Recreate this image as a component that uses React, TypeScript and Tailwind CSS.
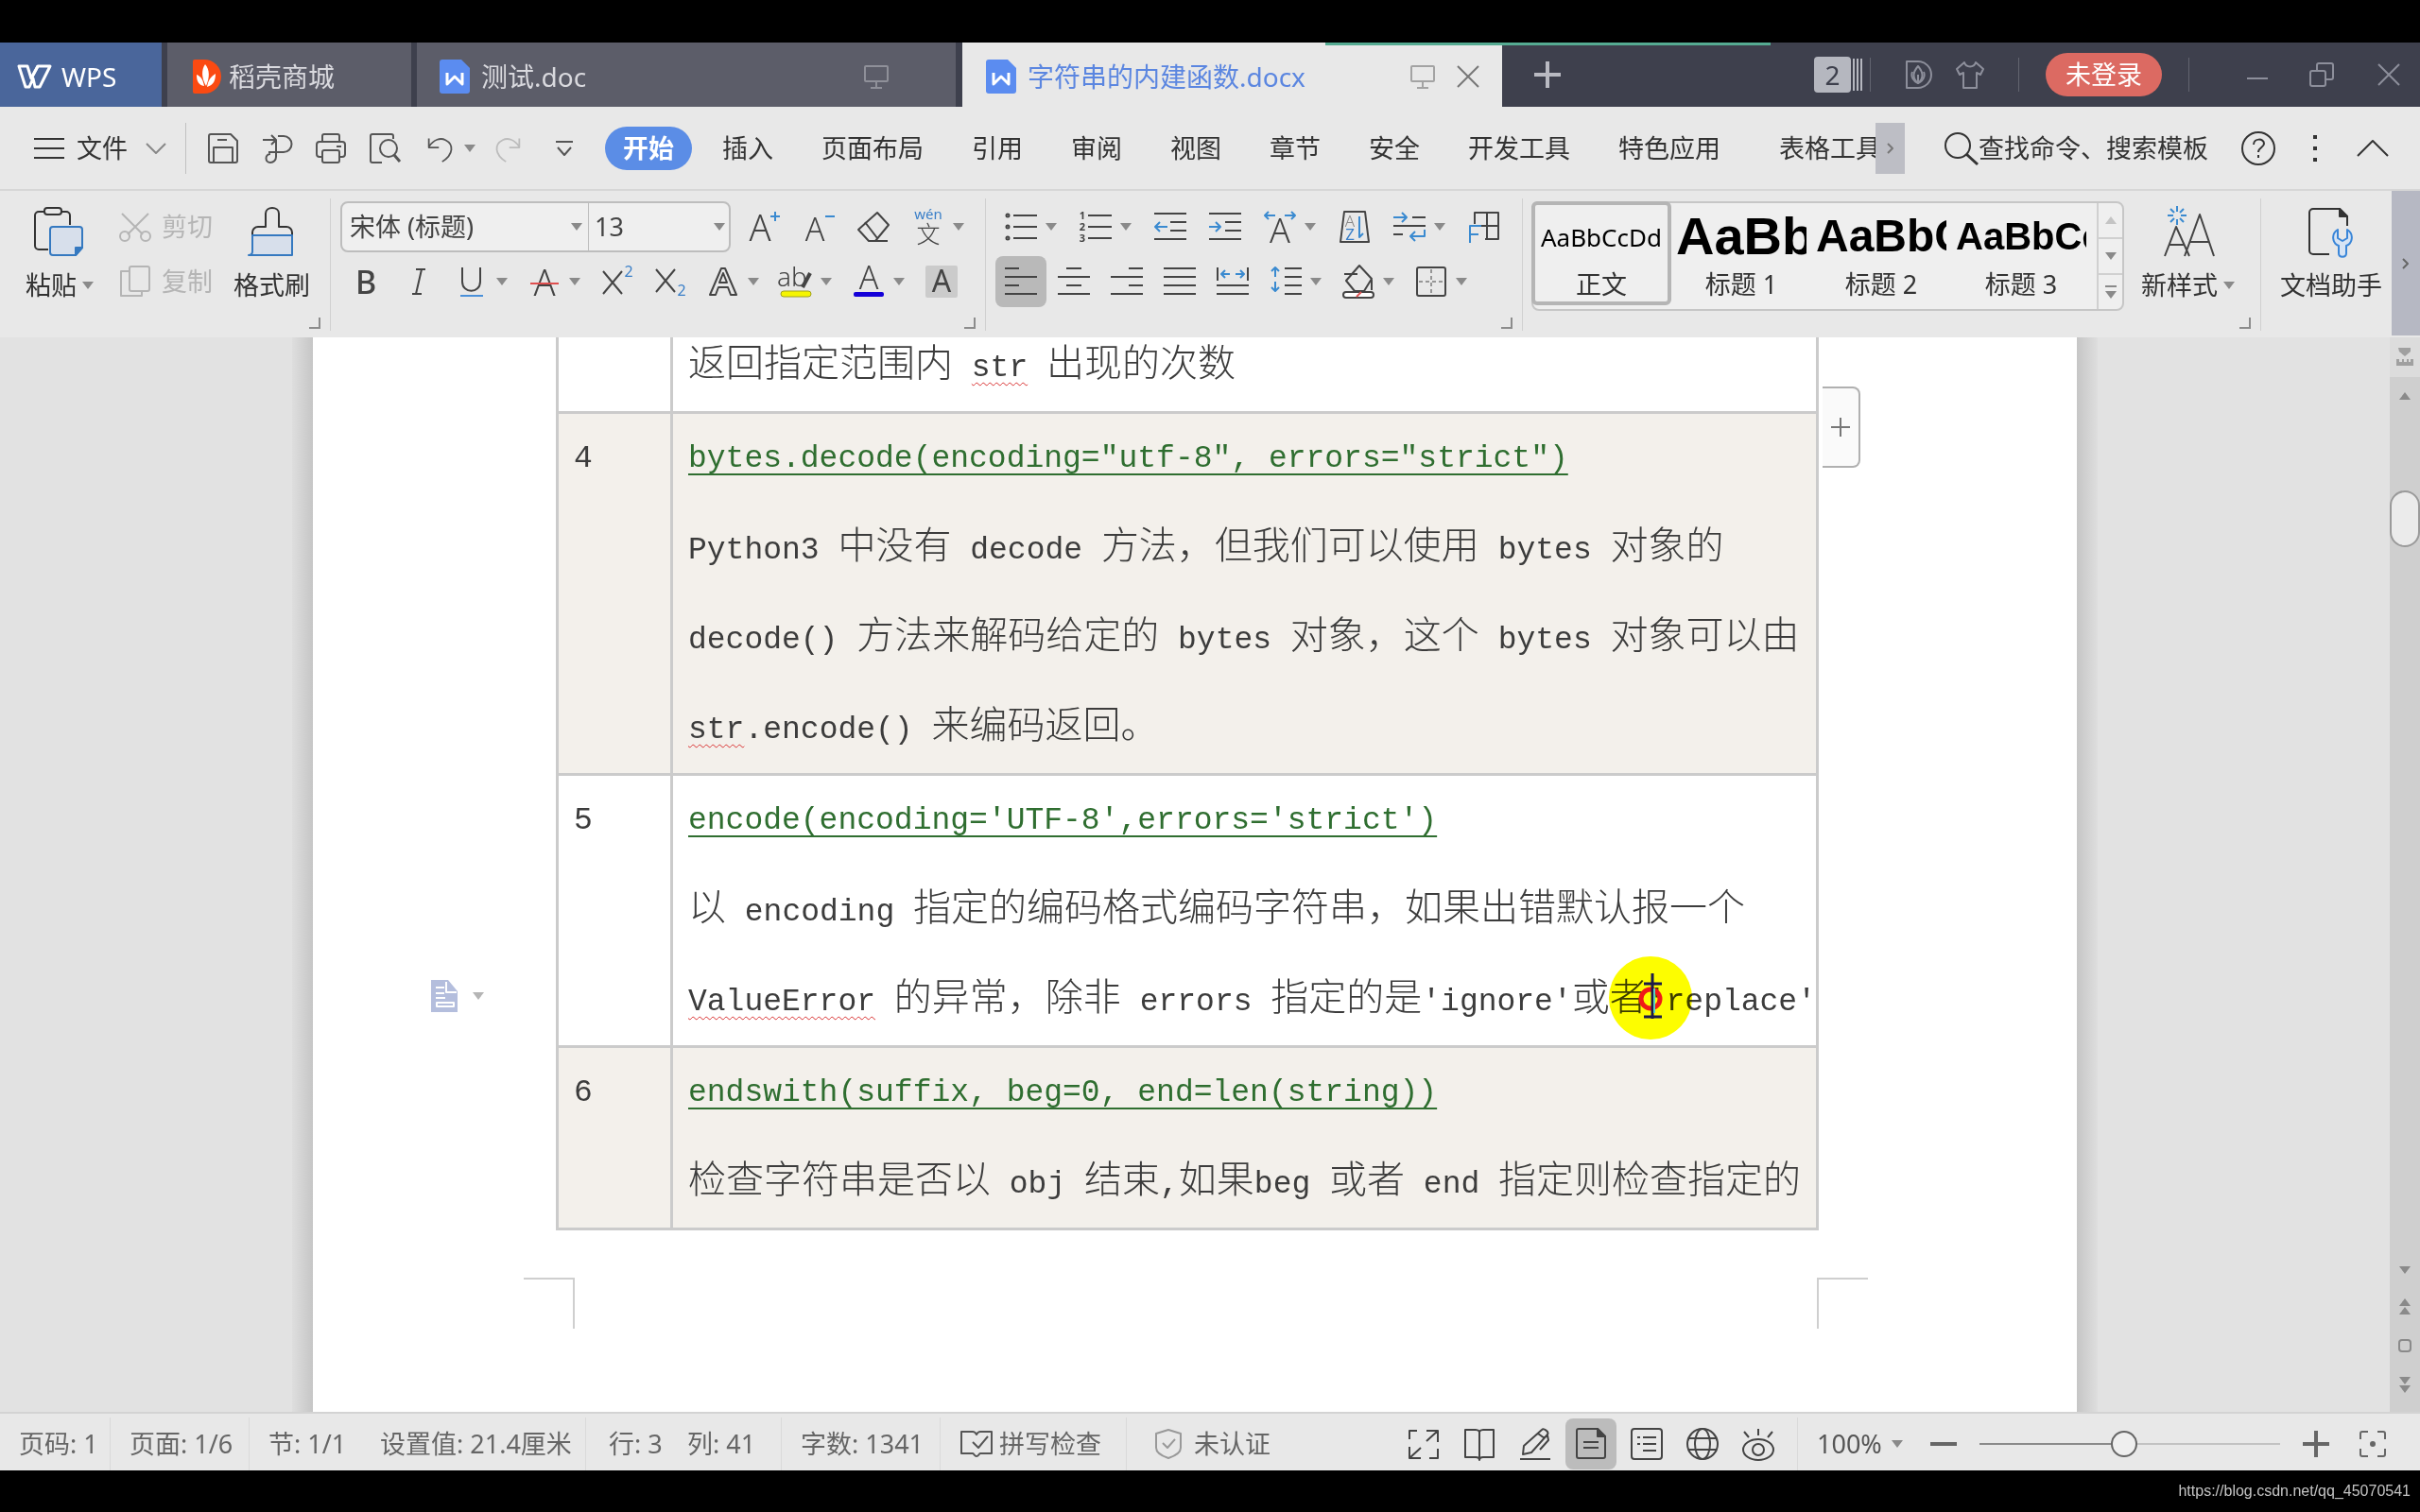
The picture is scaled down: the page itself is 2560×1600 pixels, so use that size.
import type { ReactNode } from "react";

type Children = { children?: ReactNode };

/* ---------- small building blocks ---------- */

function Icon({ children, className = "size-[34px]", box = "0 0 34 34" }: Children & { className?: string; box?: string }) {
    return (
        <svg viewBox={box} className={`shrink-0 overflow-visible ${className}`} fill="none" stroke="currentColor" strokeWidth="2" strokeLinejoin="round" aria-hidden="true">
            {children}
        </svg>
    );
}

function Caret({ className = "text-[#8a8a8a]" }: { className?: string }) {
    return (
        <svg viewBox="0 0 12 8" className={`h-2 w-3 shrink-0 ${className}`} fill="currentColor" aria-hidden="true">
            <path d="M0 0h12L6 8z" />
        </svg>
    );
}

function Tool({ label, caret, children, active }: Children & { label: string; caret?: boolean; active?: boolean }) {
    return (
        <button
            aria-label={label}
            className={active ? "-mx-[10px] flex h-[54px] w-[54px] shrink-0 items-center justify-center rounded-lg bg-[#b9b9b9]" : "flex h-[54px] shrink-0 items-center gap-[9px]"}
        >
            <Icon>{children}</Icon>
            {caret && <Caret />}
        </button>
    );
}

function Glyph({ children, x = 17, y = 29, size = 34, fill = "#444", weight = 300 }: Children & { x?: number; y?: number; size?: number; fill?: string; weight?: number }) {
    return (
        <text x={x} y={y} textAnchor="middle" fontSize={size} fill={fill} stroke="none" fontWeight={weight}>
            {children}
        </text>
    );
}

function Launcher() {
    return (
        <svg viewBox="0 0 12 12" className="absolute right-[11px] bottom-[9px] size-3" fill="none" stroke="#8c8c8c" strokeWidth="2" aria-hidden="true">
            <path d="M11 0v11H0" />
        </svg>
    );
}

function Divider({ className = "h-[54px] bg-[#c9c9c9]" }: { className?: string }) {
    return <span className={`w-px shrink-0 ${className}`} />;
}

function DocIcon() {
    return (
        <Icon className="h-9 w-8" box="0 0 32 36">
            <path d="M3 0h20l9 9v24a3 3 0 0 1-3 3H3a3 3 0 0 1-3-3V3a3 3 0 0 1 3-3z" fill="#5b8cf0" stroke="none" />
            <path d="M8 14v12l8-8 8 8V14" stroke="#fff" strokeWidth="3" />
        </Icon>
    );
}

function ScreenIcon() {
    return (
        <Icon className="h-7 w-7" box="0 0 28 28">
            <rect x="2" y="3" width="24" height="16" rx="1" />
            <path d="M14 19v6M8 26h12" />
        </Icon>
    );
}

/* ---------- window title bar with document tabs ---------- */

function TabBar() {
    return (
        <header className="flex h-[68px] shrink-0 bg-[#3e404d] text-[28px] leading-9">
            <button className="flex w-[171px] items-center gap-2.5 bg-[#4a669b] pt-1 pl-[18px] text-white">
                <Icon className="h-[26px] w-[37px]" box="0 0 37 26">
                    <path d="M2 2h9l4 13 7-13h13L24 24h-5l-2-9-4 9H9z" strokeWidth="3" />
                    <path d="M22 2l-7 13" strokeWidth="3" />
                </Icon>
                WPS
            </button>
            <button className="ml-1.5 flex w-[258px] items-center gap-2 bg-[#5c5d69] pt-1 pl-[27px] text-[#d9d9de]">
                <Icon className="h-9 w-[30px]" box="0 0 30 36">
                    <path d="M0 2a2 2 0 0 1 2-2h10a18 18 0 0 1 0 36H2a2 2 0 0 1-2-2z" fill="#fb4a12" stroke="none" />
                    <path d="M13 5c5 6 5 14 1 23-5-9-5-17-1-23zM4 16c5 2 7 6 8 12-6-1-8-5-8-12zM24 15c0 7-2 12-9 14 1-7 4-11 9-14z" fill="#fff" stroke="none" />
                </Icon>
                稻壳商城
            </button>
            <button className="ml-1.5 flex w-[570px] items-center gap-3 bg-[#5c5d69] pt-1 pl-6 text-[#d9d9de]">
                <DocIcon />
                测试.doc
                <span className="mr-[70px] ml-auto text-[#8f9099]">
                    <ScreenIcon />
                </span>
            </button>
            <div className="ml-[7px] flex w-[571px] items-center gap-3 bg-[#e8e8e8] pt-1 pl-[25px] text-[#5b86e0]">
                <DocIcon />
                字符串的内建函数.docx
                <span className="mr-2.5 ml-auto text-[#a3a3a3]">
                    <ScreenIcon />
                </span>
                <button aria-label="关闭标签" className="mr-6 text-[#777]">
                    <Icon className="size-6" box="0 0 24 24">
                        <path d="M1 1l22 22M23 1L1 23" />
                    </Icon>
                </button>
            </div>
            <button aria-label="新建标签" className="ml-[34px] text-[#b9bac2]">
                <Icon className="size-7" box="0 0 28 28">
                    <path d="M14 0v28M0 14h28" strokeWidth="4" />
                </Icon>
            </button>

            <div className="ml-auto flex items-center pr-[21px] text-[#8d8f9b]">
                <span className="flex h-[38px] w-[39px] items-center justify-center rounded-sm bg-[#b5b7bf] text-[#3e404d]">2</span>
                <Icon className="h-[38px] w-3" box="0 0 12 38">
                    <path d="M3 2v34M7 2v34M11 2v34" stroke="#b5b7bf" />
                </Icon>
                <Divider className="ml-2 h-9 bg-[#62646f]" />
                <button aria-label="稻壳" className="ml-9">
                    <Icon className="size-[30px]" box="0 0 30 30">
                        <path d="M2 1h12a14 14 0 0 1 0 28H2zM14 6c6 7 6 13 0 18-6-5-6-11 0-18zM14 24v-9" />
                        <path d="M8 12c-2 5 1 10 6 12 5-2 8-7 6-12" />
                    </Icon>
                </button>
                <button aria-label="皮肤" className="ml-6">
                    <Icon className="size-[30px]" box="0 0 30 30">
                        <path d="M9 2L1 9l3 6 4-2v16h14V13l4 2 3-6-8-7c-2 6-10 6-12 0z" />
                    </Icon>
                </button>
                <Divider className="ml-9 h-9 bg-[#62646f]" />
                <button className="ml-7 h-[46px] w-[123px] rounded-full bg-[#dc6a62] text-[27px] text-white">未登录</button>
                <Divider className="ml-7 h-9 bg-[#62646f]" />
                <button aria-label="最小化" className="ml-[60px]">
                    <Icon className="size-6" box="0 0 24 24">
                        <path d="M1 16h22" />
                    </Icon>
                </button>
                <button aria-label="还原" className="ml-[43px]">
                    <Icon className="size-[26px]" box="0 0 26 26">
                        <rect x="1" y="9" width="16" height="16" rx="2" />
                        <path d="M8 9V3a2 2 0 0 1 2-2h13a2 2 0 0 1 2 2v13a2 2 0 0 1-2 2h-6" />
                    </Icon>
                </button>
                <button aria-label="关闭" className="ml-[46px]">
                    <Icon className="size-6" box="0 0 24 24">
                        <path d="M1 1l22 22M23 1L1 23" />
                    </Icon>
                </button>
            </div>
        </header>
    );
}

/* ---------- menu row ---------- */

const menus = ["插入", "页面布局", "引用", "审阅", "视图", "章节", "安全", "开发工具", "特色应用"];

function MenuRow() {
    return (
        <nav className="flex h-[89px] shrink-0 items-center border-b-2 border-[#d6d6d6] pl-9 text-[27px] leading-9 text-[#333]">
            <button className="flex items-center gap-[13px]">
                <Icon className="h-6 w-8" box="0 0 32 24">
                    <path d="M0 2h32M0 12h32M0 22h32" />
                </Icon>
                文件
                <Icon className="ml-1.5 h-3 w-[22px] text-[#888]" box="0 0 22 12">
                    <path d="M1 1l10 10L21 1" />
                </Icon>
            </button>
            <Divider className="ml-5 h-[54px] bg-[#c0c0c0]" />
            <div className="ml-[22px] flex items-center gap-[23px] text-[#555]">
                <button aria-label="保存">
                    <Icon>
                        <path d="M2 4a2 2 0 0 1 2-2h21l7 7v21a2 2 0 0 1-2 2H4a2 2 0 0 1-2-2z" />
                        <path d="M7 32V16h20v16M11 8h10" />
                    </Icon>
                </button>
                <button aria-label="输出为PDF">
                    <Icon>
                        <path d="M2 8h13M11 3l5 5-5 5M18 4h6a8 8 0 0 1 0 17H8M16 8v18a6 6 0 0 1-6 6c-6 0-6-9 0-9" />
                    </Icon>
                </button>
                <button aria-label="打印">
                    <Icon>
                        <path d="M8 10V4a2 2 0 0 1 2-2h14a2 2 0 0 1 2 2v6M8 26H5a3 3 0 0 1-3-3V13a3 3 0 0 1 3-3h24a3 3 0 0 1 3 3v10a3 3 0 0 1-3 3h-3M23 15h5" />
                        <rect x="8" y="19" width="18" height="13" rx="2" />
                    </Icon>
                </button>
                <button aria-label="打印预览">
                    <Icon>
                        <path d="M14 32H4a2 2 0 0 1-2-2V4a2 2 0 0 1 2-2h20a2 2 0 0 1 2 2v3" />
                        <circle cx="21" cy="17" r="9" />
                        <path d="M27 24l6 7" strokeWidth="3" />
                    </Icon>
                </button>
                <button aria-label="撤销" className="ml-1 flex items-center gap-2.5">
                    <Icon className="size-[30px]">
                        <path d="M3 5v11h12M3 15C9 6 17 4 23 7c10 5 10 17-4 26" />
                    </Icon>
                    <Caret />
                </button>
                <button aria-label="恢复" className="-ml-1 text-[#bcbcbc]">
                    <Icon className="size-[30px]">
                        <path d="M31 5v11H19M31 15C25 6 17 4 11 7 1 12 1 24 15 33" />
                    </Icon>
                </button>
                <button aria-label="自定义快速访问" className="ml-3">
                    <Icon className="h-5 w-5" box="0 0 20 20">
                        <path d="M1 3h18M3 9l7 8 7-8" />
                    </Icon>
                </button>
            </div>
            <button className="ml-[33px] h-[46px] w-[92px] rounded-full bg-[#5b8de6] font-bold text-white">开始</button>
            <div className="ml-8 flex gap-[51px]">
                {menus.map((m) => (
                    <button key={m} className="shrink-0">
                        {m}
                    </button>
                ))}
            </div>
            <button className="ml-[62px] w-[102px] shrink-0 overflow-hidden text-left whitespace-nowrap">表格工具</button>
            <button aria-label="更多选项卡" className="flex h-[54px] w-[31px] items-center justify-center bg-[#bdbec5] text-[#777]">
                <Icon className="h-3 w-2" box="0 0 8 12">
                    <path d="M1 1l5 5-5 5" />
                </Icon>
            </button>
            <div className="ml-auto flex items-center pr-[33px]">
                <label className="flex items-center">
                    <Icon className="h-9 w-9" box="0 0 36 36">
                        <circle cx="14" cy="15" r="13" />
                        <path d="M23 24l12 11" strokeWidth="3" />
                    </Icon>
                    <input className="w-[249px] placeholder-[#333] outline-none" placeholder="查找命令、搜索模板" />
                </label>
                <button aria-label="帮助" className="ml-[29px]">
                    <Icon className="h-9 w-9" box="0 0 36 36">
                        <circle cx="18" cy="18" r="17" />
                        <path d="M13 14c0-7 11-7 11-1 0 4-6 4-6 9M18 25v3" />
                    </Icon>
                </button>
                <button aria-label="更多" className="ml-10">
                    <Icon className="h-8 w-1" box="0 0 4 32">
                        <path d="M2 2v4M2 14v4M2 26v4" strokeWidth="4" />
                    </Icon>
                </button>
                <button aria-label="收起功能区" className="ml-[42px]">
                    <Icon className="h-[18px] w-[34px]" box="0 0 34 18">
                        <path d="M1 17L17 1l16 16" />
                    </Icon>
                </button>
            </div>
        </nav>
    );
}

/* ---------- ribbon ---------- */

function Group({ children, className }: Children & { className: string }) {
    return (
        <section className={`relative flex shrink-0 ${className}`}>
            {children}
            <Divider className="absolute top-2 right-0 h-[140px] bg-[#d0d0d0]" />
        </section>
    );
}

function ClipboardGroup() {
    return (
        <Group className="w-[350px] pl-[27px] text-[27px] leading-8 text-[#333]">
            <button className="flex w-[99px] flex-col items-start gap-3.5 pt-4">
                <Icon className="ml-2 size-[54px]" box="0 0 54 54">
                    <path d="M12 6H6a4 4 0 0 0-4 4v32a4 4 0 0 0 4 4h10M30 6h5a4 4 0 0 1 4 4v10" stroke="#333" />
                    <rect x="12" y="2" width="18" height="7" rx="3" stroke="#333" />
                    <path d="M21 22h28a3 3 0 0 1 3 3v19l-7 8H21a3 3 0 0 1-3-3V25a3 3 0 0 1 3-3z" fill="#d7dfeb" stroke="#3579c0" />
                    <path d="M52 44h-7v8z" fill="#3579c0" stroke="#3579c0" />
                </Icon>
                <span className="flex items-center gap-1.5">
                    粘贴
                    <Caret />
                </span>
            </button>
            <div className="flex w-[121px] flex-col gap-1 pt-[11px] text-[#b5b5b5]">
                <button className="flex h-[54px] items-center gap-[11px]">
                    <Icon>
                        <path d="M3 3l22 22M31 3L9 25" />
                        <circle cx="6" cy="27" r="5" />
                        <circle cx="28" cy="27" r="5" />
                    </Icon>
                    剪切
                </button>
                <button className="flex h-[54px] items-center gap-[11px]">
                    <Icon>
                        <rect x="11" y="1" width="21" height="26" rx="2" />
                        <path d="M11 6H2v26h22v-5" />
                    </Icon>
                    复制
                </button>
            </div>
            <button className="flex flex-col items-center gap-3.5 pt-4">
                <Icon className="size-[54px]" box="0 0 54 54">
                    <path d="M6 31h42v20H6z" fill="#d7dfeb" stroke="none" />
                    <path d="M6 31v-3a6 6 0 0 1 6-6h8V8c0-8 14-8 14 0v14h8a6 6 0 0 1 6 6v3" stroke="#333" />
                    <path d="M6 31h42v21H2c3 0 4-1 4-4z" stroke="#3579c0" />
                </Icon>
                格式刷
            </button>
            <Launcher />
        </Group>
    );
}

function FontGroup() {
    return (
        <Group className="w-[693px] flex-col gap-1 pt-[11px] pl-2.5 text-[#444]">
            <div className="flex items-center gap-6">
                <div className="-mr-1.5 flex h-[54px] w-[413px] items-center rounded-lg border-2 border-[#bdbdbd] bg-[#efefef] text-[27px] leading-9 text-[#444]">
                    <select aria-label="字体" className="w-[242px] appearance-none pl-2 outline-none">
                        <option>宋体 (标题)</option>
                    </select>
                    <Caret />
                    <Divider className="ml-1.5 h-full bg-[#bdbdbd]" />
                    <select aria-label="字号" className="w-[132px] appearance-none pl-1.5 outline-none">
                        <option>13</option>
                    </select>
                    <Caret />
                </div>
                <Tool label="增大字号">
                    <Glyph x={13} y={32} size={38}>A</Glyph>
                    <path d="M29 1v10M24 6h10" stroke="#3a8ad0" />
                </Tool>
                <Tool label="减小字号">
                    <Glyph x={13} y={32} size={34}>A</Glyph>
                    <path d="M24 6h10" stroke="#3a8ad0" />
                </Tool>
                <Tool label="清除格式">
                    <path d="M21 2L33 15 19 32h-7L1 20zM8 12l13 17M12 32h20" />
                </Tool>
                <Tool label="拼音指南" caret>
                    <Glyph y={9} size={15} fill="#3a7fc8" weight={400}>wén</Glyph>
                    <Glyph y={34} size={25}>文</Glyph>
                </Tool>
            </div>
            <div className="flex items-center gap-[22px] pl-2.5">
                <Tool label="加粗">
                    <Glyph y={30} weight={500}>B</Glyph>
                </Tool>
                <Tool label="倾斜">
                    <path d="M14 4h10M10 30h10M20 4l-6 26" />
                </Tool>
                <Tool label="下划线" caret>
                    <path d="M7 2v15c0 13 19 13 19 0V2" />
                    <path d="M5 32h24" stroke="#4a90d9" />
                </Tool>
                <Tool label="删除线" caret>
                    <Glyph y={32} size={38}>A</Glyph>
                    <path d="M2 19h30" stroke="#e04f4f" />
                </Tool>
                <Tool label="上标">
                    <path d="M2 6l20 24M22 6L2 30" />
                    <Glyph x={29} y={12} size={16} fill="#3a7fc8" weight={400}>2</Glyph>
                </Tool>
                <Tool label="下标">
                    <path d="M2 4l20 24M22 4L2 28" />
                    <Glyph x={29} y={32} size={16} fill="#3a7fc8" weight={400}>2</Glyph>
                </Tool>
                <Tool label="文字效果" caret>
                    <path d="M3 31L15 3h4l12 28h-6l-3-8H12l-3 8zM13 18h8l-4-10z" />
                </Tool>
                <Tool label="突出显示" caret>
                    <Glyph x={13} y={22} size={28}>ab</Glyph>
                    <path d="M24 23l8-15" strokeWidth="4" />
                    <rect x="1" y="27" width="32" height="6" rx="3" fill="#f5f500" stroke="#a0a020" strokeWidth="1" />
                </Tool>
                <Tool label="字体颜色" caret>
                    <Glyph y={25} size={34}>A</Glyph>
                    <rect x="1" y="28" width="32" height="5" rx="2" fill="#1400d8" stroke="none" />
                </Tool>
                <Tool label="字符底纹">
                    <rect width="34" height="34" rx="2" fill="#cbcbcb" stroke="none" />
                    <Glyph y={28} size={32} weight={400}>A</Glyph>
                </Tool>
            </div>
            <Launcher />
        </Group>
    );
}

function ParagraphGroup() {
    return (
        <Group className="w-[568px] flex-col gap-1 pt-[11px] pl-5 text-[#444]">
            <div className="flex items-center gap-6">
                <Tool label="项目符号" caret>
                    <path d="M9 5h25M9 17h25M9 29h25" />
                    <circle cx="3" cy="5" r="1.5" />
                    <circle cx="3" cy="17" r="1.5" />
                    <circle cx="3" cy="29" r="1.5" />
                </Tool>
                <Tool label="编号" caret>
                    <path d="M9 5h25M9 17h25M9 29h25" />
                    <Glyph x={3} y={9} size={11} weight={700}>1</Glyph>
                    <Glyph x={3} y={21} size={11} weight={700}>2</Glyph>
                    <Glyph x={3} y={33} size={11} weight={700}>3</Glyph>
                </Tool>
                <Tool label="减少缩进">
                    <path d="M0 3h34M17 12h17M17 21h17M0 30h34" />
                    <path d="M14 17H1M6 12l-5 5 5 5" stroke="#3a8ad0" />
                </Tool>
                <Tool label="增加缩进">
                    <path d="M0 3h34M17 12h17M17 21h17M0 30h34" />
                    <path d="M0 17h12M7 12l5 5-5 5" stroke="#3a8ad0" />
                </Tool>
                <Tool label="中文版式" caret>
                    <Glyph y={34} size={36}>A</Glyph>
                    <path d="M12 5H1M5 1L1 5l4 4M22 5h11M29 1l4 4-4 4" stroke="#3a8ad0" />
                </Tool>
                <Tool label="排序">
                    <path d="M6 1h22l4 32H2z" />
                    <Glyph x={12} y={17} size={17} fill="#888">A</Glyph>
                    <Glyph x={12} y={31} size={17} fill="#3a7fc8" weight={400}>Z</Glyph>
                    <path d="M22 6v22l4-4" stroke="#3a8ad0" />
                </Tool>
                <Tool label="显示编辑标记" caret>
                    <path d="M20 7h14M0 16h34M0 25h10" />
                    <path d="M0 7h14M9 2l5 5-5 5M33 20v7H18M23 22l-5 5 5 5" stroke="#3a8ad0" />
                </Tool>
                <Tool label="制表位">
                    <path d="M7 14V2h25v28H18M20 2v28M14 16h18" />
                    <path d="M2 34V16h12M2 25h9" stroke="#3a8ad0" />
                </Tool>
            </div>
            <div className="flex items-center gap-[22px]">
                <Tool label="左对齐" active>
                    <path d="M0 3h15M0 12h34M0 21h15M0 30h34" />
                </Tool>
                <Tool label="居中对齐">
                    <path d="M9 3h16M0 12h34M9 21h16M0 30h34" />
                </Tool>
                <Tool label="右对齐">
                    <path d="M19 3h15M0 12h34M19 21h15M0 30h34" />
                </Tool>
                <Tool label="两端对齐">
                    <path d="M0 3h34M0 12h34M0 21h34M0 30h34" />
                </Tool>
                <Tool label="分散对齐">
                    <path d="M1 2v14M33 2v14M0 21h34M0 30h34" />
                    <path d="M14 9H5M9 5L5 9l4 4M20 9h9M25 5l4 4-4 4" stroke="#3a8ad0" />
                </Tool>
                <Tool label="行距" caret>
                    <path d="M16 3h18M16 12h18M16 21h18M16 30h18" />
                    <path d="M6 12V2M2 6l4-4 4 4M6 17v10M2 23l4 4 4-4" stroke="#3a8ad0" />
                </Tool>
                <Tool label="底纹颜色" caret>
                    <path d="M18 0L4 16l9 11h10l8-13zM2 9h14M31 15v11" />
                    <rect x="1" y="28" width="32" height="6" rx="3" fill="#fff" />
                    <path d="M15 33l5-5" stroke="#d55" />
                </Tool>
                <Tool label="边框" caret>
                    <rect x="2" y="2" width="30" height="30" rx="2" />
                    <path d="M17 4v28M4 17h28" strokeDasharray="4 3" strokeWidth="1" />
                </Tool>
            </div>
            <Launcher />
        </Group>
    );
}

const headings = [
    { name: "标题 1", sample: "AaBb", size: "text-[56px]" },
    { name: "标题 2", sample: "AaBbC", size: "text-[48px]" },
    { name: "标题 3", sample: "AaBbCc", size: "text-[40px]" },
];

function StyleGroup() {
    return (
        <Group className="w-[781px] pt-[11px] pl-[9px] text-[27px] leading-8 text-[#333]">
            <div className="flex h-[116px] w-[627px] rounded-lg border-2 border-[#c6c6c6] bg-[#efefef]">
                <button className="-mt-0.5 -ml-0.5 flex h-[110px] w-[148px] flex-col items-center rounded-md border-4 border-[#b5b5b5]">
                    <span className="flex h-[68px] items-center text-[26px] text-black">AaBbCcDd</span>
                    正文
                </button>
                {headings.map((h) => (
                    <button key={h.name} className="flex w-[148px] flex-col items-center">
                        <span className={`flex h-[70px] w-[138px] items-center overflow-hidden font-['Liberation_Sans',sans-serif] font-bold text-black ${h.size}`}>{h.sample}</span>
                        {h.name}
                    </button>
                ))}
                <div className="ml-auto flex w-[27px] flex-col divide-y-2 divide-[#d0d0d0] border-l-2 border-[#d0d0d0]">
                    <button aria-label="上一行" className="flex flex-1 items-center justify-center">
                        <span className="rotate-180">
                            <Caret className="text-[#c4c4c4]" />
                        </span>
                    </button>
                    <button aria-label="下一行" className="flex flex-1 items-center justify-center">
                        <Caret />
                    </button>
                    <button aria-label="展开样式" className="flex flex-1 flex-col items-center justify-center gap-1">
                        <span className="h-0.5 w-3 bg-[#8a8a8a]" />
                        <Caret />
                    </button>
                </div>
            </div>
            <button className="ml-[18px] flex h-[116px] flex-col gap-3.5 pt-[5px]">
                <Icon className="ml-6 size-[54px]" box="0 0 54 54">
                    <path d="M1 53L13 22l14 31M6 41h16M22 53L38 9l15 44M27 38h21" stroke="#444" />
                    <path d="M14 0v6M14 14v6M4 10h6M18 10h6M7 3l4 4M21 3l-4 4M7 17l4-4M21 17l-4-4" stroke="#3a8ad0" />
                </Icon>
                <span className="flex items-center gap-1.5">
                    新样式
                    <Caret />
                </span>
            </button>
            <Launcher />
        </Group>
    );
}

function Ribbon() {
    return (
        <div className="flex h-[155px] shrink-0">
            <ClipboardGroup />
            <FontGroup />
            <ParagraphGroup />
            <StyleGroup />
            <button className="ml-5 flex shrink-0 flex-col items-center gap-3.5 pt-4 text-[27px] leading-8 text-[#333]">
                <Icon className="size-[54px]" box="0 0 54 54">
                    <path d="M25 51H8a4 4 0 0 1-4-4V7a4 4 0 0 1 4-4h28l8 8v10" stroke="#333" />
                    <path d="M36 3v8h8z" fill="#333" stroke="#333" />
                    <path d="M34 25c-8 5-5 15 1 17v8c0 5 8 5 8 0v-8c6-2 9-12 1-17v9l-5 3-5-3z" fill="#d7e4f4" stroke="#3a86d8" />
                </Icon>
                文档助手
            </button>
            <button aria-label="向右滚动" className="ml-auto flex h-[153px] w-[30px] shrink-0 items-center justify-center bg-[#b6b8c3] text-[#666]">
                <Icon className="h-3 w-2" box="0 0 8 12">
                    <path d="M1 1l5 5-5 5" />
                </Icon>
            </button>
        </div>
    );
}

/* ---------- document ---------- */

// Full-width characters take two columns of the half-width grid, so Latin runs are set smaller.
function Line({ children }: { children: string }) {
    const runs = children.match(/[\x20-\x7e]+|[^\x20-\x7e]+/g) ?? [];
    return (
        <>
            {runs.map((run, i) =>
                /[\x20-\x7e]/.test(run) ? (
                    <span key={i} className="text-[33px] leading-none">
                        {run}
                    </span>
                ) : (
                    run
                ),
            )}
        </>
    );
}

function Typo({ children }: { children: string }) {
    return <span className="text-[33px] leading-none underline decoration-[#d83030] decoration-wavy decoration-1 underline-offset-[6px]">{children}</span>;
}

function Signature({ children }: { children: string }) {
    return (
        <a href="#top" className="block text-[33px] text-[#2f6e30]">
            <span className="underline decoration-2 underline-offset-[7px]">{children}</span>
        </a>
    );
}

function Row({ no, shaded, children }: Children & { no?: string; shaded?: boolean }) {
    return (
        <tr className={shaded ? "bg-[#f3f0eb]" : "bg-white"}>
            <td className="border-3 border-[#cbcbcb] pl-4 align-top text-[33px]">{no}</td>
            <td className="border-3 border-[#cbcbcb] pl-4 align-top">{children}</td>
        </tr>
    );
}

function CropMark({ left }: { left?: boolean }) {
    return <span className={left ? "h-[54px] w-[54px] border-t-2 border-r-2 border-[#cfcfcf]" : "h-[54px] w-[54px] border-t-2 border-l-2 border-[#cfcfcf]"} />;
}

function Pointer() {
    return (
        <span className="absolute top-[655px] left-[1371px] size-[88px]">
            <span className="absolute inset-0 rounded-full bg-[#fdfd00] mix-blend-multiply" />
            <svg viewBox="0 0 88 88" className="relative size-[88px]" fill="none" aria-hidden="true">
                <circle cx="44" cy="45" r="10" stroke="#f01818" strokeWidth="5" />
                <path d="M46 18v48M37 29h8M47 29h9M37 64h8M47 64h9" stroke="#1c1a4a" strokeWidth="3" />
                <path d="M48 34v26" stroke="#5ad0c0" strokeWidth="2" />
            </svg>
        </span>
    );
}

function Page() {
    return (
        <article className="relative mx-auto w-[1866px] shrink-0 overflow-hidden bg-white pl-[257px] font-['Liberation_Mono','Noto_Sans_CJK_SC',monospace] text-[40px] leading-[95px] font-light text-[#3c3c3c]">
            <table className="-mt-5 w-[1336px] table-fixed border-collapse whitespace-pre">
                <colgroup>
                    <col className="w-[121px]" />
                    <col />
                </colgroup>
                <tbody>
                    <Row>
                        <p>
                            <Line>返回指定范围内 </Line>
                            <Typo>str</Typo>
                            <Line> 出现的次数</Line>
                        </p>
                    </Row>
                    <Row no="4" shaded>
                        <Signature>bytes.decode(encoding="utf-8", errors="strict")</Signature>
                        <p>
                            <Line>Python3 中没有 decode 方法，但我们可以使用 bytes 对象的</Line>
                        </p>
                        <p>
                            <Line>decode() 方法来解码给定的 bytes 对象，这个 bytes 对象可以由</Line>
                        </p>
                        <p>
                            <Typo>str</Typo>
                            <Line>.encode() 来编码返回。</Line>
                        </p>
                    </Row>
                    <Row no="5">
                        <Signature>encode(encoding='UTF-8',errors='strict')</Signature>
                        <p>
                            <Line>以 encoding 指定的编码格式编码字符串，如果出错默认报一个</Line>
                        </p>
                        <p>
                            <Typo>ValueError</Typo>
                            <Line> 的异常，除非 errors 指定的是'ignore'或者'replace'</Line>
                        </p>
                    </Row>
                    <Row no="6" shaded>
                        <Signature>endswith(suffix, beg=0, end=len(string))</Signature>
                        <p>
                            <Line>检查字符串是否以 obj 结束,如果beg 或者 end 指定则检查指定的</Line>
                        </p>
                    </Row>
                </tbody>
            </table>
            <div className="mt-[50px] -ml-[34px] flex w-[1422px] justify-between">
                <CropMark left />
                <CropMark />
            </div>

            <button aria-label="添加列" className="absolute top-[52px] left-[1597px] flex h-[86px] w-10 items-center justify-center rounded-r-lg border-2 border-l-0 border-[#b0b0b0] bg-[#fafafa] text-[#777]">
                <Icon className="size-5" box="0 0 20 20">
                    <path d="M10 0v20M0 10h20" />
                </Icon>
            </button>
            <button aria-label="段落布局" className="absolute top-[680px] left-[123px] flex items-center gap-3.5">
                <Icon className="h-[34px] w-8" box="0 0 32 34">
                    <path d="M2 0h18l10 12v22H2z" fill="#b4bedd" stroke="none" />
                    <path d="M7 8h9M7 14h9M7 19h10M8 24h18v4H8zM18 2v11h11" stroke="#fff" />
                </Icon>
                <Caret className="text-[#b5b5b5]" />
            </button>
            <Pointer />
        </article>
    );
}

function ScrollBar() {
    return (
        <aside className="flex w-8 shrink-0 flex-col items-center bg-[#cfcfcf] text-[#7c7c7c]">
            <button aria-label="标尺" className="flex h-[42px] w-full items-center justify-center bg-[#dcdcdc]">
                <Icon className="h-5 w-5" box="0 0 20 20">
                    <path d="M3 0h13v4l-6 5-6-5zM1 12h3v3h3v-3h2v3h3v-3h2v3h2v-3h3v7H1z" fill="#a0a0a0" stroke="none" />
                </Icon>
            </button>
            <button aria-label="向上" className="mt-4 rotate-180">
                <Caret />
            </button>
            <div className="mt-[96px] h-[60px] w-8 rounded-full border-2 border-[#9a9a9a] bg-[#ebebeb]" />
            <div className="mt-auto mb-5 flex flex-col items-center gap-[26px]">
                <button aria-label="向下">
                    <Caret />
                </button>
                <button aria-label="上一页" className="flex rotate-180 flex-col gap-px">
                    <Caret />
                    <Caret />
                </button>
                <button aria-label="选择浏览对象" className="size-3.5 rounded-sm border-2 border-[#8a8a8a]" />
                <button aria-label="下一页" className="flex flex-col gap-px">
                    <Caret />
                    <Caret />
                </button>
            </div>
        </aside>
    );
}

/* ---------- status bar ---------- */

function StatusBar() {
    return (
        <footer className="flex h-[62px] shrink-0 items-center border-t-2 border-[#d3d3d3] pt-1 pl-5 text-[27px] leading-9 whitespace-nowrap text-[#666]">
            <span className="w-24">页码: 1</span>
            <Divider className="h-full bg-[#dadada]" />
            <span className="w-[146px] pl-5">页面: 1/6</span>
            <Divider className="h-full bg-[#dadada]" />
            <span className="w-[138px] pl-5">节: 1/1</span>
            <span className="w-[217px]">设置值: 21.4厘米</span>
            <Divider className="h-full bg-[#dadada]" />
            <span className="w-[107px] pl-6">行: 3</span>
            <span className="w-[99px]">列: 41</span>
            <Divider className="h-full bg-[#dadada]" />
            <span className="w-[167px] pl-5">字数: 1341</span>
            <Divider className="h-full bg-[#dadada]" />
            <button className="flex w-[196px] items-center gap-1.5 pl-5">
                <Icon className="h-7 w-9 text-[#555]" box="0 0 36 28">
                    <path d="M18 4c-1-2-2-3-4-3H2v23h12c1 0 2 3 4 3s3-3 4-3h12V1H22c-2 0-3 1-4 3z" />
                    <path d="M14 12l6 6 10-12" />
                </Icon>
                拼写检查
            </button>
            <Divider className="h-full bg-[#dadada]" />
            <button className="flex items-center gap-3 pl-[29px]">
                <Icon className="h-8 w-[30px] text-[#999]" box="0 0 30 32">
                    <path d="M15 1l13 4v15c0 5-7 9-13 11-6-2-13-6-13-11V5z" />
                    <path d="M9 15l5 5 8-9" />
                </Icon>
                未认证
            </button>

            <div className="ml-auto flex items-center gap-[25px] text-[#444]">
                <button aria-label="全屏显示">
                    <Icon>
                        <path d="M2 12V3h8M20 3h12v12M32 3L20 14M2 20v12h12M2 32l12-11M32 22v10h-9" />
                    </Icon>
                </button>
                <button aria-label="阅读版式">
                    <Icon>
                        <path d="M17 4c-1-2-2-2-4-2H2v29h11c2 0 4 1 4 3V4c1-2 2-2 4-2h11v29H21c-2 0-4 1-4 3" />
                    </Icon>
                </button>
                <button aria-label="写作模式">
                    <Icon>
                        <path d="M4 28l1-9L24 2c2-2 8 2 6 5L13 26zM20 6l7 5M30 8l1 5-9 10M1 33h32" />
                    </Icon>
                </button>
                <button aria-label="页面视图" className="-mx-2.5 flex size-[54px] items-center justify-center rounded-lg bg-[#bcbcbc]">
                    <Icon>
                        <path d="M5 1h19l8 8v21a2 2 0 0 1-2 2H4a2 2 0 0 1-2-2V3a2 2 0 0 1 2-2zM9 15h16M9 21h16" />
                        <path d="M24 1v8h8z" fill="#444" />
                    </Icon>
                </button>
                <button aria-label="大纲">
                    <Icon>
                        <rect x="1" y="1" width="32" height="32" rx="3" />
                        <path d="M7 10h3M13 10h14M7 17h3M13 17h14M13 24h14" />
                    </Icon>
                </button>
                <button aria-label="Web版式">
                    <Icon>
                        <circle cx="17" cy="17" r="16" />
                        <ellipse cx="17" cy="17" rx="8" ry="16" />
                        <path d="M3 11h28M3 23h28" />
                    </Icon>
                </button>
                <button aria-label="护眼模式">
                    <Icon>
                        <ellipse cx="17" cy="23" rx="16" ry="11" />
                        <circle cx="17" cy="23" r="6" />
                        <path d="M17 1v7M2 4l5 6M32 4l-5 6" />
                    </Icon>
                </button>
            </div>
            <Divider className="ml-6 h-full bg-[#dadada]" />
            <button className="ml-5 flex w-[120px] items-center gap-2.5 text-[#555]">
                100%
                <Caret />
            </button>
            <button aria-label="缩小">
                <Icon className="size-7 text-[#666]" box="0 0 28 28">
                    <path d="M0 14h28" strokeWidth="4" />
                </Icon>
            </button>
            <input
                type="range"
                aria-label="显示比例"
                defaultValue={48}
                className="mx-6 h-7 w-[318px] appearance-none bg-[linear-gradient(90deg,#8a8a8a_50%,#c2c2c2_50%)] bg-[length:100%_2px] bg-center bg-no-repeat [&::-webkit-slider-thumb]:size-7 [&::-webkit-slider-thumb]:appearance-none [&::-webkit-slider-thumb]:rounded-full [&::-webkit-slider-thumb]:border-2 [&::-webkit-slider-thumb]:border-[#666] [&::-webkit-slider-thumb]:bg-[#efefef]"
            />
            <button aria-label="放大">
                <Icon className="size-7 text-[#666]" box="0 0 28 28">
                    <path d="M0 14h28M14 0v28" strokeWidth="4" />
                </Icon>
            </button>
            <button aria-label="最佳显示比例" className="mr-9 ml-8">
                <Icon className="size-7 text-[#666]" box="0 0 28 28">
                    <path d="M1 9V3a2 2 0 0 1 2-2h6M19 1h6a2 2 0 0 1 2 2v6M27 19v6a2 2 0 0 1-2 2h-6M9 27H3a2 2 0 0 1-2-2v-6" />
                    <circle cx="14" cy="14" r="2" fill="currentColor" />
                </Icon>
            </button>
        </footer>
    );
}

export default function App() {
    return (
        <div className="flex h-screen flex-col overflow-hidden bg-black pt-[45px] font-['Noto_Sans','Noto_Sans_CJK_SC',sans-serif]">
            <div className="relative flex min-h-0 flex-1 flex-col bg-[#e8e8e8]">
                {/* share indicator above the active tab */}
                <span className="absolute top-0 left-[1402px] h-[3px] w-[471px] bg-[#55ab92]" />
                <TabBar />
                <MenuRow />
                <Ribbon />
                <main className="flex min-h-0 flex-1 bg-[#e2e2e2]">
                    <div className="flex min-w-0 flex-1 justify-center overflow-hidden">
                        <span className="w-[22px] bg-linear-to-l from-[#c6c6c6] to-[#dedede]" />
                        <div className="flex">
                            <Page />
                        </div>
                        <span className="w-[22px] bg-linear-to-r from-[#c6c6c6] to-[#dedede]" />
                    </div>
                    <ScrollBar />
                </main>
                <StatusBar />
            </div>
            <p className="flex h-11 shrink-0 items-center justify-end pr-2.5 font-['Liberation_Sans',sans-serif] text-[16px] text-[#c4c4c4]">https://blog.csdn.net/qq_45070541</p>
        </div>
    );
}
